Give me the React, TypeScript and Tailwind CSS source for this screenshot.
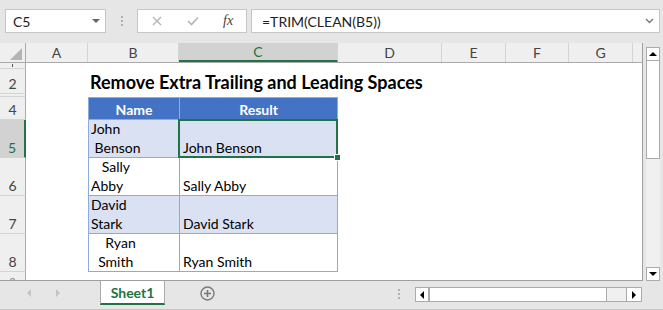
import React from "react";

const font = { fontFamily: "Lato, 'Open Sans', sans-serif" };

const cols = [
  { l: "A", w: "w-[62px]" },
  { l: "B", w: "w-[91px]" },
  { l: "C", w: "w-[159px]" },
  { l: "D", w: "w-[104px]" },
  { l: "E", w: "w-[64px]" },
  { l: "F", w: "w-[63px]" },
  { l: "G", w: "w-[64px]" },
];

const RowHead = ({ n, h, active }: { n?: string; h: string; active?: boolean }) => (
  <div
    className={`${h} w-[26px] shrink-0 flex items-end justify-center border-b border-[#d4d4d4] ${
      active ? "bg-[#d2d2d2] border-r-2 border-r-[#217346] text-[#217346]" : "bg-[#efefef] border-r border-r-[#ababab] text-[#444]"
    } text-[14px] leading-[19px] overflow-hidden`}
  >
    {n}
  </div>
);

const Cell = ({
  lines,
  w,
  shade,
  extra = "",
}: {
  lines: string[];
  w: string;
  shade?: boolean;
  extra?: string;
}) => (
  <div
    className={`${w} h-full shrink-0 flex flex-col justify-end border-b border-l border-[#8ea9db] pl-[2px] text-[14px] leading-[19px] text-black whitespace-pre ${
      shade ? "bg-[#d9e1f2]" : "bg-white"
    } ${extra}`}
  >
    {lines.map((t, i) => (
      <div key={i}>{t}</div>
    ))}
  </div>
);

const data = [
  { n: "5", name: ["John", " Benson"], res: "John Benson", shade: true, sel: true },
  { n: "6", name: ["   Sally", "Abby"], res: "Sally Abby", shade: false },
  { n: "7", name: ["David", "Stark"], res: "David Stark", shade: true },
  { n: "8", name: ["    Ryan", "  Smith"], res: "Ryan Smith", shade: false },
];

const Tri = ({ dir, cls }: { dir: "up" | "down" | "left" | "right"; cls: string }) => {
  const pts = {
    up: "0,4 4,0 8,4",
    down: "0,0 8,0 4,4",
    left: "4,0 4,8 0,4",
    right: "0,0 0,8 4,4",
  }[dir];
  const vb = dir === "up" || dir === "down" ? "0 0 8 4" : "0 0 4 8";
  const size = dir === "up" || dir === "down" ? { width: 8, height: 4 } : { width: 4, height: 8 };
  return (
    <svg viewBox={vb} {...size} className={cls}>
      <polygon points={pts} fill="currentColor" />
    </svg>
  );
};

export default function App() {
  return (
    <div className="w-[663px] h-[310px] bg-[#e6e6e6] flex flex-col overflow-hidden" style={font}>
      {/* formula bar */}
      <div className="h-[43px] flex items-start pt-[9px] pl-[5px] pr-[3px] shrink-0">
        <div className="w-[101px] h-[24px] bg-white border border-[#c6c6c6] flex items-center justify-between pl-[7px] pr-[5px] text-[14px] text-[#222]">
          <span>C5</span>
          <Tri dir="down" cls="text-[#666]" />
        </div>
        <div className="w-[31px] h-[24px] flex flex-col items-center justify-center gap-[2px]">
          <div className="w-[2px] h-[2px] bg-[#b0b0b0]" />
          <div className="w-[2px] h-[2px] bg-[#b0b0b0]" />
          <div className="w-[2px] h-[2px] bg-[#b0b0b0]" />
        </div>
        <div className="w-[110px] h-[24px] bg-white border border-[#c6c6c6] flex items-center pl-[14px]">
          <svg width="10" height="10" viewBox="0 0 10 10" className="text-[#b4b4b4]">
            <path d="M1 1 L9 9 M9 1 L1 9" stroke="currentColor" strokeWidth="1.3" fill="none" />
          </svg>
          <svg width="12" height="10" viewBox="0 0 12 10" className="ml-[25px] text-[#b4b4b4]">
            <path d="M1 5 L4.5 8.5 L11 1.5" stroke="currentColor" strokeWidth="1.6" fill="none" />
          </svg>
          <span
            className="ml-[24px] text-[14px] italic text-[#444] leading-none"
            style={{ fontFamily: "'Liberation Serif', serif" }}
          >
            fx
          </span>
        </div>
        <div className="ml-[4px] flex-1 h-[24px] bg-white border border-[#c6c6c6] flex items-center justify-between pl-[10px] pr-[5px] text-[14px] text-[#222]">
          <span>=TRIM(CLEAN(B5))</span>
          <svg width="9" height="6" viewBox="0 0 9 6" className="text-[#777]">
            <path d="M1 1 L4.5 4.5 L8 1" stroke="currentColor" strokeWidth="1.4" fill="none" />
          </svg>
        </div>
      </div>

      {/* sheet + vertical scrollbar */}
      <div className="h-[238px] flex shrink-0">
        <div className="w-[643px] h-full border-r border-b border-[#9f9f9f] bg-white flex flex-col overflow-hidden">
          {/* column headers */}
          <div className="h-[20px] flex shrink-0 bg-[#efefef] border-b border-[#ababab] text-[14px] text-[#444]">
            <div className="w-[26px] h-full shrink-0 border-r border-[#ababab] relative">
              <svg width="12" height="12" viewBox="0 0 12 12" className="absolute right-[3px] bottom-[2px]">
                <polygon points="12,0 12,12 0,12" fill="#b4b4b4" />
              </svg>
            </div>
            {cols.map((c) => (
              <div
                key={c.l}
                className={`${c.w} h-full shrink-0 flex items-center justify-center border-r border-[#d4d4d4] ${
                  c.l === "C" ? "bg-[#d2d2d2] border-b-2 border-b-[#217346] text-[#217346]" : ""
                }`}
              >
                {c.l}
              </div>
            ))}
            <div className="flex-1" />
          </div>

          {/* row 1 (partly hidden) */}
          <div className="h-[6px] flex shrink-0">
            <div className="h-full w-[26px] shrink-0 bg-[#efefef] border-r border-[#ababab] border-b border-b-[#d4d4d4] flex justify-center">
              <div className="w-px h-[3px] bg-[#555] mt-[1px]" />
            </div>
          </div>

          {/* row 2 title */}
          <div className="h-[25px] flex shrink-0">
            <RowHead n="2" h="h-full" />
            <div className="pl-[64px] flex items-end pb-[1px] text-[18px] font-bold text-black leading-[22px] whitespace-nowrap">
              Remove Extra Trailing and Leading Spaces
            </div>
          </div>

          {/* row 3 */}
          <div className="h-[3px] flex shrink-0">
            <RowHead h="h-full" />
          </div>

          {/* row 4 header */}
          <div className="h-[23px] flex shrink-0">
            <RowHead n="4" h="h-full" />
            <div className="w-[62px] shrink-0" />
            <div className="w-[91px] h-full shrink-0 bg-[#4472c4] border border-r-0 border-[#8ea9db] flex items-end justify-center text-white font-bold text-[14px] leading-[19px]">
              Name
            </div>
            <div className="w-[159px] h-full shrink-0 bg-[#4472c4] border border-[#8ea9db] flex items-end justify-center text-white font-bold text-[14px] leading-[19px]">
              Result
            </div>
          </div>

          {data.map((r) => (
            <div key={r.n} className={`h-[38px] flex shrink-0 ${r.sel ? "relative z-10" : ""}`}>
              <RowHead n={r.n} h="h-full" active={r.sel} />
              <div className="w-[62px] shrink-0" />
              <Cell lines={r.name} w="w-[91px]" shade={r.shade} />
              <div className="relative">
                <Cell lines={[r.res]} w="w-[159px]" shade={r.shade} extra="border-r pl-[3px]" />
                {r.sel && (
                  <>
                    <div className="absolute -top-[1px] -left-px w-[160px] h-[39px] border-2 border-[#217346]" />
                    <div className="absolute left-[155px] top-[34px] w-[7px] h-[7px] bg-[#217346] border border-white" />
                  </>
                )}
              </div>
            </div>
          ))}

          {/* row 9 partly */}
          <div className="flex-1 flex">
            <div className="w-[26px] h-full shrink-0 bg-[#efefef] border-r border-[#ababab] flex justify-center">
              <div className="w-[5px] h-[3px] border-t border-x border-[#888] rounded-t-full mt-[6px]" />
            </div>
          </div>
        </div>

        {/* vertical scrollbar */}
        <div className="flex-1 pl-[3px] pt-[4px]">
          <div className="w-[14px] h-[234px] bg-[#f0f0f0] flex flex-col">
            <div className="h-[14px] bg-white border border-[#ababab] flex items-center justify-center">
              <Tri dir="up" cls="text-black" />
            </div>
            <div className="h-[99px] -mt-px bg-white border border-[#ababab]" />
            <div className="flex-1" />
            <div className="h-[14px] bg-white border border-[#ababab] flex items-center justify-center">
              <Tri dir="down" cls="text-black" />
            </div>
          </div>
        </div>
      </div>

      {/* sheet tabs */}
      <div className="flex-1 flex items-start border-b border-[#c6c6c6]">
        <div className="w-[100px] h-[24px] flex items-center pl-[27px] gap-[25px] text-[#c4c4c4]">
          <Tri dir="left" cls="" />
          <Tri dir="right" cls="" />
        </div>
        <div className="w-[65px] h-[24px] bg-white border-x border-[#ababab] border-b-2 border-b-[#217346] flex items-center justify-center text-[14px] font-bold text-[#217346]">
          Sheet1
        </div>
        <div className="ml-[35px] mt-[5px]">
          <svg width="15" height="15" viewBox="0 0 15 15">
            <circle cx="7.5" cy="7.5" r="6.5" fill="none" stroke="#7a7a7a" strokeWidth="1.4" />
            <path d="M7.5 4 V11 M4 7.5 H11" stroke="#7a7a7a" strokeWidth="1.6" />
          </svg>
        </div>
        <div className="flex-1" />
        <div className="h-[24px] flex flex-col justify-center gap-[2px] mr-[15px] pt-[1px]">
          <div className="w-[2px] h-[2px] bg-[#b0b0b0]" />
          <div className="w-[2px] h-[2px] bg-[#b0b0b0]" />
          <div className="w-[2px] h-[2px] bg-[#b0b0b0]" />
        </div>
        <div className="w-[227px] h-[15px] mt-[6px] mr-[21px] flex bg-[#f0f0f0] border border-[#ababab]">
          <div className="w-[14px] h-full bg-white border-r-2 border-[#ababab] flex items-center justify-center">
            <Tri dir="left" cls="text-black" />
          </div>
          <div className="w-[177px] h-full bg-white border-r border-[#ababab]" />
          <div className="flex-1" />
          <div className="w-[15px] h-full bg-white border-l border-[#ababab] flex items-center justify-center">
            <Tri dir="right" cls="text-black" />
          </div>
        </div>
      </div>
    </div>
  );
}
